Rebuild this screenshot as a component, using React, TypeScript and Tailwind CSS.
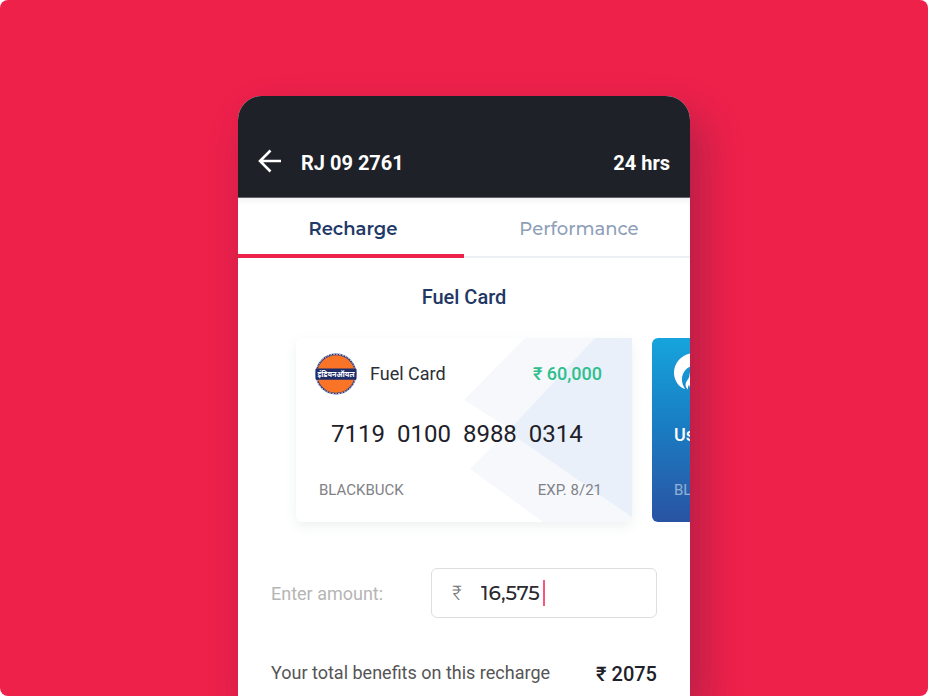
import { useState } from "react";

function IndianOilLogo() {
  return (
    <svg viewBox="0 0 42 42" className="size-[42px]" role="img" aria-label="IndianOil">
      <circle cx="21" cy="21" r="19.6" fill="#f97426" stroke="#2b3a78" strokeWidth="1.6" />
      <circle
        cx="21"
        cy="21"
        r="19.8"
        fill="none"
        stroke="#e6dde4"
        strokeWidth="1"
        strokeDasharray="1.600 1.400"
      />
      <rect x="0.5" y="15.4" width="41" height="11.4" rx="1" fill="#1f2d6b" />
      <text
        x="21"
        y="24.2"
        fill="#ffffff"
        fontSize="7.200"
        fontWeight="700"
        textAnchor="middle"
        fontFamily="'Noto Sans Devanagari', 'Noto Sans', sans-serif"
      >
        इंडियनऑयल
      </text>
    </svg>
  );
}

function FlameLogo() {
  return (
    <svg viewBox="0 0 40 40" className="size-10" role="img" aria-label="Fuel provider">
      <path
        fill="#ffffff"
        d="M20 0C9 0 0 9 0 19.500c0 6.500 3 12 8 15.200 1.200.8 2.200 1.100 3.200 1.300C9 32.500 7.600 29 8 25.500c.6-6 4-10.500 9-12 7-2 14 3 14.500 11 .2 4-1 8-3.500 11.500C34.500 33 40 27 40 19.500 40 9 31 0 20 0Z"
      />
      <path
        fill="#ffffff"
        d="M15.500 21.500c.2 3-1.300 4.500-2.700 6.500-2 3-1.500 6 1.200 8.500-.3-2 .2-3.500 1.200-5 .2 2.200.8 4 2.300 5.500h6c3-3 3-8 1-11.500-2-3-4.500-6-5.500-10-1.500 1.500-3 3.500-3.500 6Z"
      />
    </svg>
  );
}

function CardPattern() {
  return (
    <svg
      viewBox="0 0 168 184"
      className="absolute inset-y-0 right-0 h-full"
      aria-hidden="true"
    >
      <path d="M61 0H168V184H79L6 131L46 91L0 62Z" fill="#f6f8fc" />
      <path d="M131 0H168V179L52 99Q45 93 50 87Z" fill="#e9f0fa" />
    </svg>
  );
}

export default function App() {
  const [amount, setAmount] = useState("16,575");

  return (
    <div className="min-h-screen bg-white font-[Roboto,'Noto_Sans',sans-serif]">
      <main className="flex min-h-screen flex-col items-center overflow-hidden rounded-lg bg-[#ee214b] pt-24">
        <section className="flex w-full max-w-[452px] flex-1 flex-col overflow-hidden rounded-t-3xl bg-white shadow-[12px_20px_40px_rgba(20,30,60,0.28)]">
          <header className="flex items-end border-b border-[#62646a] bg-[#1e2128] px-5 pt-[53px] pb-5 text-white">
            <button type="button" aria-label="Back" className="mr-5 flex h-7 items-start">
              <svg
                viewBox="0 0 23 24"
                className="h-6 w-[23px]"
                fill="none"
                stroke="currentColor"
                strokeWidth="2.600"
              >
                <path d="M23 12H2M12.500 1.500L2 12L12.500 22.500" />
              </svg>
            </button>
            <h1 className="text-xl leading-7 font-bold">RJ 09 2761</h1>
            <span className="ml-auto text-xl leading-7 font-bold">24 hrs</span>
          </header>

          <nav className="flex h-[60px] font-[Montserrat,Inter,sans-serif] text-lg shadow-[inset_0_6px_6px_-4px_rgba(120,140,160,0.15)]">
            <button
              type="button"
              className="flex-1 border-b-4 border-[#ee214b] pt-1.5 pl-1 font-semibold text-[#1f3a68]"
            >
              Recharge
            </button>
            <button
              type="button"
              className="flex-1 border-b-2 border-[#edf0f4] pt-1 pl-1 font-medium text-[#8f9fb9]"
            >
              Performance
            </button>
          </nav>

          <h2 className="pt-[25px] text-center text-xl leading-7 font-medium text-[#1f3864]">
            Fuel Card
          </h2>

          <div className="flex gap-5 overflow-hidden pt-[27px] pb-[46px] pl-[58px]">
            <article className="relative h-[184px] w-[336px] shrink-0 rounded-md bg-white shadow-[0_4px_12px_rgba(90,120,120,0.1)]">
              <CardPattern />
              <div className="relative flex h-full flex-col pt-[15px] pr-[30px] pl-[19px]">
                <div className="flex items-center">
                  <IndianOilLogo />
                  <h3 className="ml-[13px] text-lg leading-6 text-[#2c2f38]">Fuel Card</h3>
                  <span className="ml-auto text-lg leading-6 font-medium text-[#2fbf8d]">
                    ₹ 60,000
                  </span>
                </div>
                <p className="flex gap-3 pt-[23px] pl-4 text-2xl leading-8 text-[#1e2129]">
                  <span>7119</span>
                  <span>0100</span>
                  <span>8988</span>
                  <span>0314</span>
                </p>
                <div className="flex justify-between pt-7 pl-1 text-[15px] leading-6 text-[#7f8288]">
                  <span>BLACKBUCK</span>
                  <span>EXP. 8/21</span>
                </div>
              </div>
            </article>

            <article className="flex h-[184px] w-[336px] shrink-0 flex-col rounded-md bg-linear-to-b from-[#16a4dc] via-[#197bc1] to-[#2853a3] pt-[15px] pl-[22px] text-white">
              <FlameLogo />
              <p className="pt-7 text-lg leading-7 font-medium">Us</p>
              <p className="pt-[29px] text-[15px] leading-6 text-white/50">BLACKBUCK</p>
            </article>
          </div>

          <form className="px-[33px]">
            <div className="flex items-center justify-between">
              <label htmlFor="amount" className="pt-0.5 text-lg text-[#b5b5b5]">
                Enter amount:
              </label>
              <div className="flex h-[50px] w-[226px] items-center rounded-md border border-[#dedede] pl-5">
                <span className="w-[29px] text-xl font-light text-[#777777]">₹</span>
                <input
                  id="amount"
                  inputMode="numeric"
                  value={amount}
                  onChange={(event) => setAmount(event.target.value)}
                  className="field-sizing-content font-[Montserrat,Inter,sans-serif] text-xl font-medium text-[#2a2b30] caret-transparent outline-none"
                />
                <span className="ml-[3px] h-[26px] w-0.5 bg-[#f4587a]" />
              </div>
            </div>
            <p className="flex items-center justify-between pt-10 pb-2 text-lg text-[#555555]">
              <span>Your total benefits on this recharge</span>
              <strong className="pt-0.5 text-xl font-medium text-[#1e2129]">₹ 2075</strong>
            </p>
          </form>
        </section>
      </main>
    </div>
  );
}
